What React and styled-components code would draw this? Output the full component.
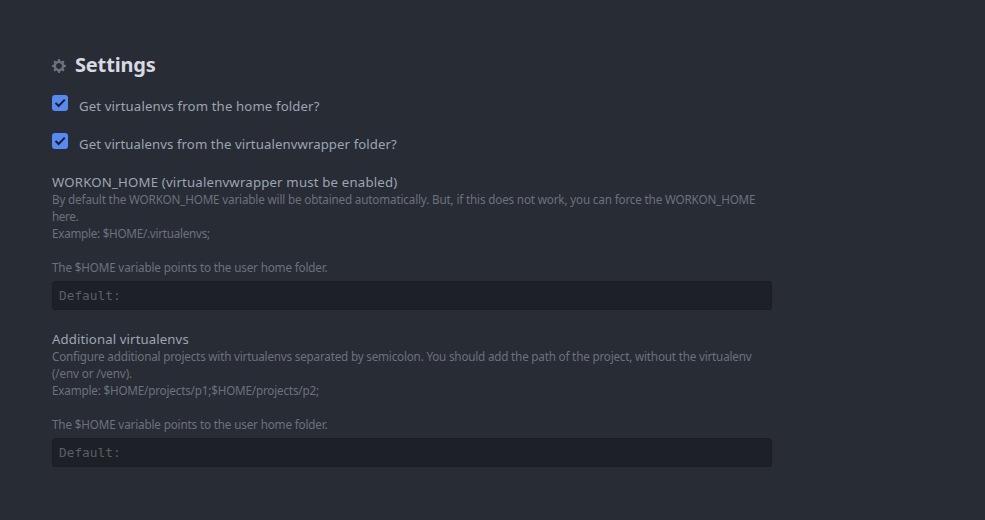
import React from "react";
import styled, { createGlobalStyle } from "styled-components";

const GlobalStyle = createGlobalStyle`
  body {
    margin: 0;
    background: #282c34;
    font-family: "Noto Sans", "Segoe UI", sans-serif;
    color: #9da5b4;
  }
  *, *::before, *::after { box-sizing: border-box; }
`;

const Panel = styled.main`
  width: 985px;
  height: 520px;
  padding: 49px 213px 0 52px;
  background: #282c34;
`;

const Header = styled.h1`
  display: flex;
  align-items: center;
  height: 32px;
  margin: 0 0 14px;
  color: #d7dae0;
  font-size: 20px;
  font-weight: 700;
  line-height: 32px;
  white-space: nowrap;
`;

const GearIcon = styled.svg`
  width: 14px;
  height: 16px;
  margin: 2px 9px 0 0;
  fill: #6b727e;
`;

const Fit = styled.span`
  display: inline-block;
  white-space: nowrap;
  letter-spacing: ${(p) => p.$spacing || 0}px;
`;

const CheckRow = styled.label`
  display: flex;
  height: 22px;
  margin-bottom: 16px;
  font-size: 13.2px;
  line-height: 22px;
`;

const CheckBox = styled.span`
  width: 16px;
  height: 16px;
  margin-right: 11px;
  border-radius: 3px;
  background: #568af2;
  svg { display: block; }
`;

const Field = styled.section`
  height: 157px;
`;

const FieldTitle = styled.h2`
  margin: 0;
  padding-top: 1px;
  height: 20px;
  color: #9da5b4;
  font-size: 13.2px;
  font-weight: 400;
  line-height: 20px;
`;

const Description = styled.div`
  margin-bottom: 5px;
  color: #6b727e;
  font-size: 11.7px;
  line-height: 17px;
`;

const Line = styled.div`
  height: 17px;
`;

const Editor = styled.div`
  height: 29px;
  padding: 0 6px;
  border: 1px solid #1a1d21;
  border-radius: 3px;
  background: #1d2026;
  color: #5a5e66;
  font-family: "DejaVu Sans Mono", Consolas, monospace;
  font-size: 12.8px;
  line-height: 27px;
`;

const checks = [
  { text: "Get virtualenvs from the home folder?", spacing: 0.13 },
  { text: "Get virtualenvs from the virtualenvwrapper folder?", spacing: 0.09 },
];

const fields = [
  {
    title: "WORKON_HOME (virtualenvwrapper must be enabled)",
    spacing: 0.19,
    lines: [
      ["By default the WORKON_HOME variable will be obtained automatically. But, if this does not work, you can force the WORKON_HOME", -0.167],
      ["here.", -0.35],
      ["Example: $HOME/.virtualenvs;", -0.27],
      ["", 0],
      ["The $HOME variable points to the user home folder.", -0.16],
    ],
  },
  {
    title: "Additional virtualenvs",
    spacing: 0.11,
    lines: [
      ["Configure additional projects with virtualenvs separated by semicolon. You should add the path of the project, without the virtualenv", -0.2],
      ["(/env or /venv).", -0.14],
      ["Example: $HOME/projects/p1;$HOME/projects/p2;", -0.19],
      ["", 0],
      ["The $HOME variable points to the user home folder.", -0.16],
    ],
  },
];

export default function App() {
  return (
    <Panel>
      <GlobalStyle />
      <Header>
        <GearIcon viewBox="0 0 14 16" aria-hidden="true">
          <path fillRule="evenodd" d="M14 8.77v-1.6l-1.94-.64-.45-1.09.88-1.84-1.13-1.13-1.81.91-1.09-.45-.69-1.92h-1.6l-.63 1.94-1.11.45-1.84-.88-1.13 1.13.91 1.81-.45 1.09L0 7.23v1.59l1.94.64.45 1.09-.88 1.84 1.13 1.13 1.81-.91 1.09.45.69 1.92h1.59l.63-1.94 1.11-.45 1.84.88 1.13-1.13-.92-1.81.47-1.09L14 8.75v.02zM7 11c-1.66 0-3-1.34-3-3s1.34-3 3-3 3 1.34 3 3-1.34 3-3 3z" />
        </GearIcon>
        <Fit $spacing={-0.17}>Settings</Fit>
      </Header>
      {checks.map((c) => (
        <CheckRow key={c.text}>
          <CheckBox>
            <svg width="16" height="16" viewBox="0 0 16 16">
              <path d="M3.5 7.9 6.6 11 12.8 4.6" fill="none" stroke="#1b1f27" strokeWidth="2" />
            </svg>
          </CheckBox>
          <Fit $spacing={c.spacing}>{c.text}</Fit>
        </CheckRow>
      ))}
      {fields.map((f) => (
        <Field key={f.title}>
          <FieldTitle><Fit $spacing={f.spacing}>{f.title}</Fit></FieldTitle>
          <Description>
            {f.lines.map(([text, spacing], i) => (
              <Line key={i}><Fit $spacing={spacing}>{text}</Fit></Line>
            ))}
          </Description>
          <Editor>Default:</Editor>
        </Field>
      ))}
    </Panel>
  );
}
